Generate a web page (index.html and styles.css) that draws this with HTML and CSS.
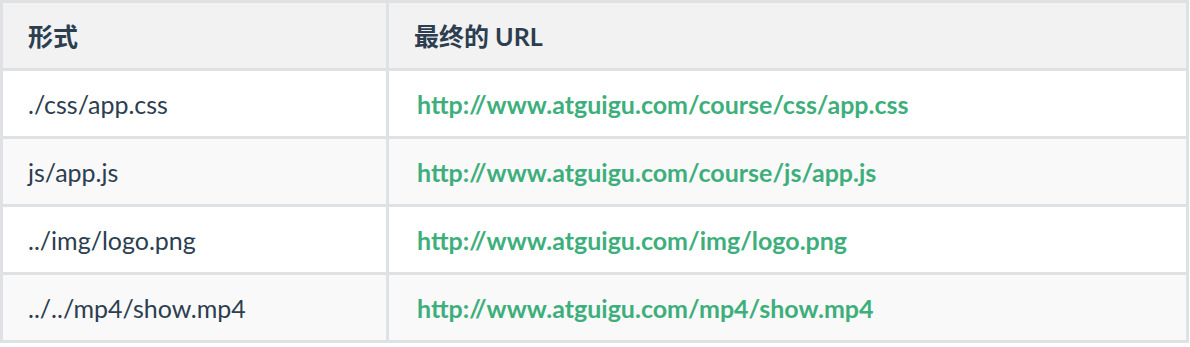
FILE: index.html
```html
<!DOCTYPE html>
<html lang="zh">
<head>
<meta charset="utf-8">
<link rel="stylesheet" href="styles.css">
</head>
<body>
<table class="url-table">
  <colgroup><col class="col-form"><col class="col-url"></colgroup>
  <thead>
    <tr><th>形式</th><th>最终的 URL</th></tr>
  </thead>
  <tbody>
    <tr><td>./css/app.css</td><td><strong class="url">http://www.atguigu.com/course/css/app.css</strong></td></tr>
    <tr><td>js/app.js</td><td><strong class="url">http://www.atguigu.com/course/js/app.js</strong></td></tr>
    <tr><td>../img/logo.png</td><td><strong class="url">http://www.atguigu.com/img/logo.png</strong></td></tr>
    <tr><td>../../mp4/show.mp4</td><td><strong class="url">http://www.atguigu.com/mp4/show.mp4</strong></td></tr>
  </tbody>
</table>
</body>
</html>
```

FILE: styles.css
```css
html, body {
  margin: 0;
  padding: 0;
  background: #ffffff;
}
body {
  font-family: Lato, "Noto Sans CJK SC", sans-serif;
  color: #2c3e50;
}
.url-table {
  border-collapse: collapse;
  table-layout: fixed;
  width: 1189px;
  font-size: 25px;
  line-height: 36px;
}
.col-form { width: 386px; }
.url-table th,
.url-table td {
  border: 3px solid #dfe2e5;
  padding: 14.5px 25px;
  text-align: left;
  white-space: nowrap;
}
.url-table th {
  font-weight: 700;
  background: #f2f2f2;
}
.url-table tbody tr:nth-child(2n) {
  background: #f9f9f9;
}
.url {
  color: #3eaf7c;
  font-weight: 700;
  padding-left: 3px;
}
```
